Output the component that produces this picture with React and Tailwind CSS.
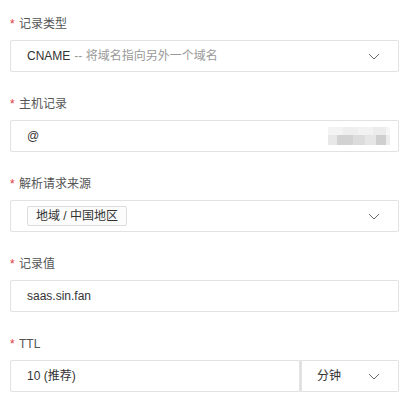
import React from "react";

const font = { fontFamily: '"Segoe UI", "Liberation Sans", "Noto Sans CJK SC", sans-serif' };

function Chevron() {
  return (
    <svg width="12" height="7" viewBox="0 0 12 7" fill="none" className="shrink-0">
      <path d="M1 1L6 6L11 1" stroke="#666" strokeWidth="1" />
    </svg>
  );
}

function Label({ children }) {
  return (
    <div className="flex items-center h-5 text-[12px] text-[#555] leading-5">
      <span className="text-[#e4393c] w-[9px] text-[12px]">*</span>
      <span>{children}</span>
    </div>
  );
}

function Mosaic() {
  const top = [
    ["w-[15px]", "bg-[#f3f3f3]"],
    ["w-[15px]", "bg-[#eeeeee]"],
    ["w-[15px]", "bg-[#f2f2f2]"],
    ["w-[13px]", "bg-[#ececec]"],
    ["w-[4px]", "bg-[#f6f6f6]"],
  ];
  const bottom = [
    ["w-[9px]", "bg-[#e8e8e8]"],
    ["w-[16px]", "bg-[#d2d2d2]"],
    ["w-[12px]", "bg-[#dcdcdc]"],
    ["w-[11px]", "bg-[#e6e6e6]"],
    ["w-[10px]", "bg-[#cfcfcf]"],
    ["w-[4px]", "bg-[#ececec]"],
  ];
  return (
    <div className="flex flex-col mr-[7px]">
      <div className="flex h-[8px]">
        {top.map(([w, c], i) => (
          <div key={i} className={`${w} ${c}`} />
        ))}
      </div>
      <div className="flex h-[10px]">
        {bottom.map(([w, c], i) => (
          <div key={i} className={`${w} ${c}`} />
        ))}
      </div>
    </div>
  );
}

export default function App() {
  return (
    <div className="w-[409px] h-[413px] bg-white px-[10px] pt-[14px]" style={font}>
      {/* 记录类型 */}
      <div className="mb-[22px]">
        <Label>记录类型</Label>
        <div className="mt-[6px] h-[32px] border border-[#e2e2e2] rounded-[2px] flex items-center pl-[16px] pr-[18px] text-[12px]">
          <span className="text-[#333]">CNAME</span>
          <span className="text-[#999] ml-[4px]">-- 将域名指向另外一个域名</span>
          <div className="flex-1" />
          <Chevron />
        </div>
      </div>

      {/* 主机记录 */}
      <div className="mb-[22px]">
        <Label>主机记录</Label>
        <div className="mt-[6px] h-[32px] border border-[#e2e2e2] rounded-[2px] flex items-center pl-[16px] pr-[1px] text-[12px]">
          <span className="text-[#333]">@</span>
          <div className="flex-1" />
          <Mosaic />
        </div>
      </div>

      {/* 解析请求来源 */}
      <div className="mb-[22px]">
        <Label>解析请求来源</Label>
        <div className="mt-[6px] h-[32px] border border-[#e2e2e2] rounded-[2px] flex items-center pl-[16px] pr-[18px] text-[12px]">
          <span className="h-[20px] flex items-center border border-[#dcdcdc] bg-[#fcfcfc] rounded-[2px] pl-[8px] pr-[8px] text-[#333]">
            地域 / 中国地区
          </span>
          <div className="flex-1" />
          <Chevron />
        </div>
      </div>

      {/* 记录值 */}
      <div className="mb-[22px]">
        <Label>记录值</Label>
        <div className="mt-[6px] h-[32px] border border-[#e2e2e2] rounded-[2px] flex items-center pl-[16px] text-[12px] text-[#333]">
          saas.sin.fan
        </div>
      </div>

      {/* TTL */}
      <div>
        <Label>TTL</Label>
        <div className="mt-[6px] h-[32px] flex text-[12px] text-[#333]">
          <div className="w-[290px] border border-[#e2e2e2] rounded-l-[2px] flex items-center pl-[16px]">
            10 (推荐)
          </div>
          <div className="flex-1 border border-[#e2e2e2] border-l-2 rounded-r-[2px] flex items-center pl-[15px] pr-[18px]">
            <span>分钟</span>
            <div className="flex-1" />
            <Chevron />
          </div>
        </div>
      </div>
    </div>
  );
}
